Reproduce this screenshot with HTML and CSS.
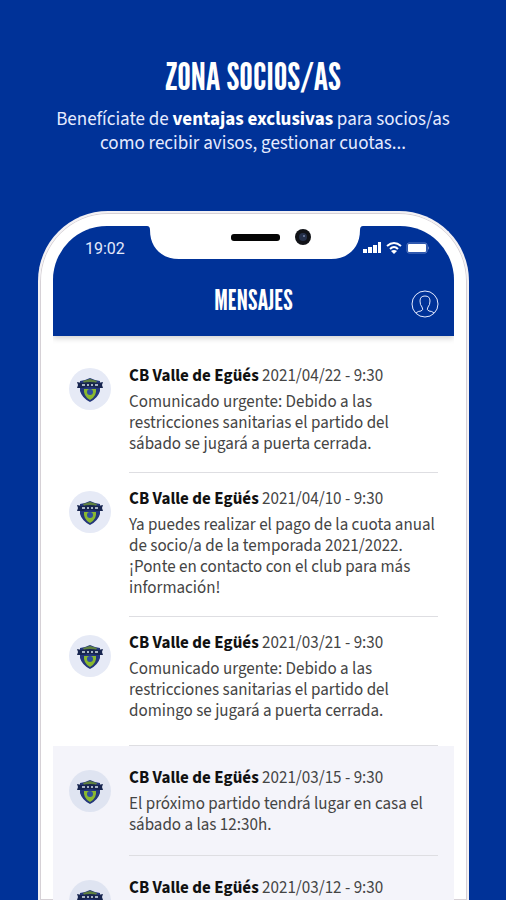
FILE: index.html
```html
<!DOCTYPE html>
<html lang="es">
<head>
    <meta charset="UTF-8">
    <meta name="viewport" content="width=device-width, initial-scale=1.0">
    <title>Zona Socios/as</title>
    <link rel="stylesheet" href="styles.css">
</head>
<body>
    <!-- Club crest, reused by every message -->
    <svg class="sprite" aria-hidden="true">
        <symbol id="crest" viewBox="0 0 28 26">
            <path d="M4 4 L9 3 L14 1 L19 3 L24 4 L24 14 Q22 21 14 25 Q6 21 4 14 Z" fill="#24377c"/>
            <path d="M7 4 L14 2 L21 4 L20 6 L8 6 Z" fill="#5f8140"/>
            <path d="M8 12 H20 Q21 19 14 23 Q7 19 8 12 Z" fill="#8ab82f"/>
            <circle cx="14" cy="15" r="3" fill="#2f4fa0"/>
            <path d="M1 5 L6 6 Q14 4 22 6 L27 5 L26 8 L27 11 L21 11 Q14 9 7 11 L1 11 L2 8 Z" fill="#17254f"/>
            <path d="M6 8 H9 M11 8 H13 M15 8 H17 M19 8 H22" stroke="#a5b3c3" stroke-width="2"/>
        </symbol>
    </svg>

    <header class="intro">
        <h1>ZONA SOCIOS/AS</h1>
        <p>Benefíciate de <strong>ventajas exclusivas</strong> para socios/as<br>como recibir avisos, gestionar cuotas...</p>
    </header>

    <main class="phone">
        <div class="screen">
            <svg class="notch" viewBox="0 0 216 34" aria-hidden="true">
                <path d="M0 0 H216 Q213 0 213 4 C213 22 201 33 184 33 H32 C15 33 3 22 3 4 Q3 0 0 0 Z" fill="#fff"/>
                <rect x="84" y="8" width="49" height="7" rx="3" fill="#050505"/>
                <circle cx="156" cy="11" r="8" fill="#111318"/>
                <circle cx="156" cy="11" r="4" fill="#25304a"/>
                <circle cx="157" cy="10" r="1" fill="#7485a8"/>
            </svg>
            <div class="top-bar">
                <div class="status">
                    <span>19:02</span>
                    <svg class="status-icons" viewBox="0 0 68 14" aria-hidden="true">
                        <g fill="#fff">
                            <rect x="1" y="8" width="4" height="4"/>
                            <rect x="6" y="6" width="4" height="6"/>
                            <rect x="11" y="4" width="4" height="8"/>
                            <rect x="16" y="1" width="3" height="11"/>
                            <path d="M29 10 L32 13 L35 10 Q32 8 29 10 Z"/>
                            <rect x="46" y="3" width="18" height="8" rx="1"/>
                            <path d="M66 5 V9 Q67 7 66 5 Z"/>
                        </g>
                        <path d="M25 5 Q32 -1 39 5 M28 8 Q32 4 36 8" fill="none" stroke="#fff" stroke-width="2"/>
                        <rect x="45" y="2" width="20" height="10" rx="2" fill="none" stroke="#5f7fc4" stroke-width="1"/>
                    </svg>
                </div>
                <div class="title-bar">
                    <h2>MENSAJES</h2>
                    <button class="profile" type="button" aria-label="Perfil">
                        <svg viewBox="0 0 30 30" aria-hidden="true">
                            <circle cx="15" cy="15" r="13"/>
                            <path d="M6 24 Q8 22 11 22 Q14 21 12 18 Q10 16 10 12 Q10 7 15 7 Q20 7 20 12 Q20 16 18 18 Q16 21 19 22 Q22 22 24 24"/>
                        </svg>
                    </button>
                </div>
            </div>

            <div class="messages">
                <article class="message first">
                    <svg class="avatar"><use href="#crest" x="7" y="9" width="28" height="26"/></svg>
                    <div class="content">
                        <h3>CB Valle de Egüés <time>2021/04/22 - 9:30</time></h3>
                        <p>Comunicado urgente: Debido a las restricciones sanitarias el partido del sábado se jugará a puerta cerrada.</p>
                    </div>
                </article>
                <article class="message">
                    <svg class="avatar"><use href="#crest" x="7" y="9" width="28" height="26"/></svg>
                    <div class="content">
                        <h3>CB Valle de Egüés <time>2021/04/10 - 9:30</time></h3>
                        <p>Ya puedes realizar el pago de la cuota anual de socio/a de la temporada 2021/2022. ¡Ponte en contacto con el club para más información!</p>
                    </div>
                </article>
                <article class="message last-new">
                    <svg class="avatar"><use href="#crest" x="7" y="9" width="28" height="26"/></svg>
                    <div class="content">
                        <h3>CB Valle de Egüés <time>2021/03/21 - 9:30</time></h3>
                        <p>Comunicado urgente: Debido a las restricciones sanitarias el partido del domingo se jugará a puerta cerrada.</p>
                    </div>
                </article>
                <article class="message read">
                    <svg class="avatar"><use href="#crest" x="7" y="9" width="28" height="26"/></svg>
                    <div class="content">
                        <h3>CB Valle de Egüés <time>2021/03/15 - 9:30</time></h3>
                        <p>El próximo partido tendrá lugar en casa el sábado a las 12:30h.</p>
                    </div>
                </article>
                <article class="message read">
                    <svg class="avatar"><use href="#crest" x="7" y="9" width="28" height="26"/></svg>
                    <div class="content">
                        <h3>CB Valle de Egüés <time>2021/03/12 - 9:30</time></h3>
                    </div>
                </article>
            </div>
        </div>
    </main>
</body>
</html>
```
FILE: styles.css
```css
* {
    box-sizing: border-box;
}
body {
    display: flex;
    flex-direction: column;
    height: 100vh;
    margin: 0;
    overflow: hidden;
    background-color: #003298;
    color: #444;
    font-family: "Source Sans Pro", "Source Sans 3", "Noto Sans CJK SC", "Noto Sans", sans-serif;
}
h1, h2, h3, p {
    margin: 0;
}
h1, h2 {
    font-family: "League Gothic", "Roboto Condensed", "Noto Sans CJK SC", sans-serif;
    font-weight: normal;
    color: #fff;
}
.sprite {
    position: absolute;
    width: 0;
    height: 0;
}
.intro {
    flex: none;
    padding: 56px 16px 55px;
    text-align: center;
    color: #e6ebff;
}
.intro h1 {
    margin-bottom: 12px;
    font-size: 38px;
    line-height: 40px;
}
.intro p {
    font-size: 19px;
    line-height: 24px;
}
.intro strong {
    color: #fff;
}

/* Phone frame, cut off by the bottom of the page */
.phone {
    flex: 1;
    min-height: 0;
    margin: 0 37px 0 38px;
    padding: 13px 13px 0;
    border: 2px solid #f3f1f4;
    border-bottom: 0;
    border-radius: 70px 70px 0 0;
    background-color: #fff;
    box-shadow: inset 0 0 0 1px #d6d1d6;
}
.screen {
    position: relative;
    height: 100%;
    overflow: hidden;
    border-radius: 54px 54px 0 0;
    background-color: #fff;
}
.notch {
    position: absolute;
    top: 0;
    left: 50%;
    width: 216px;
    height: 34px;
    margin-left: -107px;
}
.top-bar {
    height: 110px;
    background-color: #003298;
    box-shadow: 0 2px 6px rgba(0, 0, 0, 0.2);
}
.status {
    display: flex;
    align-items: center;
    justify-content: space-between;
    height: 44px;
    padding: 0 24px 0 32px;
    color: #e3e9fb;
    font-family: Roboto, sans-serif;
    font-size: 16px;
}
.status-icons {
    width: 68px;
    height: 14px;
}
.title-bar {
    display: grid;
    grid-template-columns: 30px 1fr 30px;
    align-items: center;
    height: 66px;
    padding: 0 14px 6px;
}
.title-bar h2 {
    grid-column: 2;
    font-size: 28px;
    text-align: center;
}
.profile {
    width: 30px;
    height: 30px;
    margin-top: 8px;
    padding: 0;
    border: 0;
    background: none;
    cursor: pointer;
}
.profile svg {
    display: block;
    fill: none;
    stroke: #e6ebff;
    stroke-width: 1;
}

.message {
    display: flex;
    gap: 18px;
    padding: 14px 16px 0;
}
.message.first {
    padding-top: 28px;
}
.avatar {
    flex: none;
    width: 42px;
    height: 42px;
    margin-top: 4px;
    border-radius: 50%;
    background-color: #e6eaf6;
}
.content {
    flex: 1;
    padding-bottom: 17px;
    border-bottom: 1px solid #dedee2;
}
.content h3 {
    margin-bottom: 4px;
    color: #111;
    font-size: 17px;
    line-height: 24px;
}
.content time {
    color: #444;
    font-weight: normal;
}
.content p {
    font-size: 17px;
    line-height: 21px;
}
.last-new .content {
    padding-bottom: 23px;
}
.message.read {
    padding-top: 20px;
    background-color: #f4f4fa;
}
.read .content {
    padding-bottom: 19px;
}
.read .avatar {
    background-color: #dfe4f1;
}
```
